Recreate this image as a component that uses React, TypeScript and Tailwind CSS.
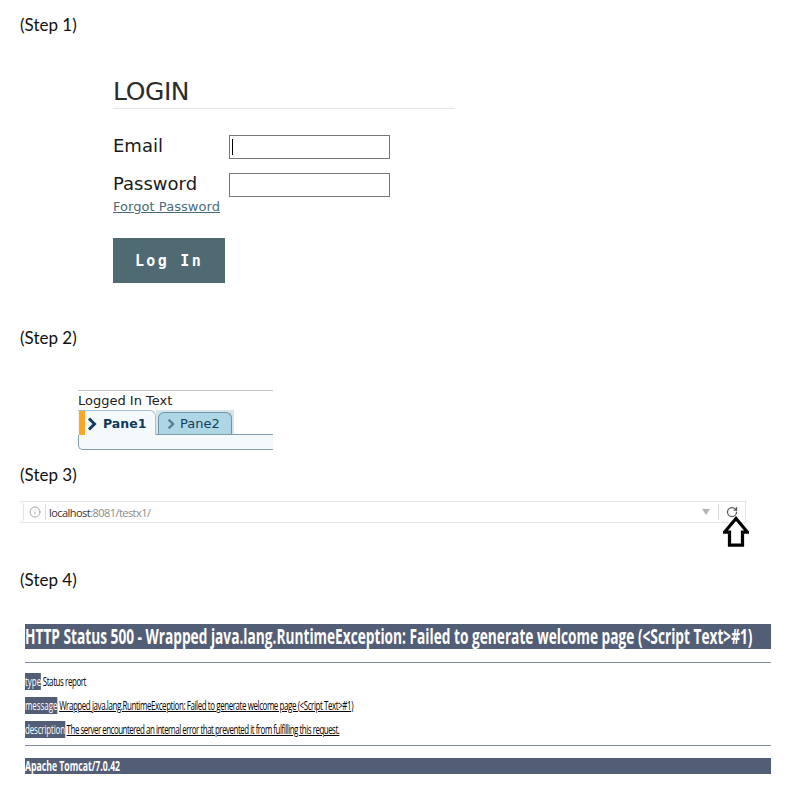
import { Info, RotateCw } from "lucide-react";

function StepLabel(props: { children: React.ReactNode; className?: string }) {
  return (
    <p
      className={`pl-[20px] h-[20px] text-[17px] leading-[20px] text-[#111] font-['Lato',sans-serif] ${props.className ?? ""}`}
    >
      {props.children}
    </p>
  );
}

function LoginForm() {
  return (
    <div className="ml-[113px] mt-[40px] font-['DejaVu_Sans',sans-serif]">
      <h1 className="w-[342px] h-[34px] border-b border-[#e6e6e6] pt-[2px] text-[25px] leading-[30px] text-[#2b2b2b] tracking-[-0.4px]">
        LOGIN
      </h1>
      <div className="mt-[26px] flex items-start">
        <label className="w-[116px] text-[18px] leading-[22px] text-[#1a1a1a]">Email</label>
        <div className="w-[161px] h-[24px] border border-[#767676] bg-white pl-[2px] pt-[3px]">
          <div className="w-px h-[16px] bg-black" />
        </div>
      </div>
      <div className="mt-[14px] flex items-start">
        <label className="w-[116px] text-[18px] leading-[22px] text-[#1a1a1a]">Password</label>
        <div className="w-[161px] h-[24px] border border-[#767676] bg-white" />
      </div>
      <a className="block mt-[2px] w-fit text-[13px] leading-[15px] text-[#4a6b7c] underline tracking-[0.05px]">
        Forgot Password
      </a>
      <button className="block mt-[24px] w-[112px] h-[45px] bg-[#4f6a72] pt-[1px] text-white text-[15px] font-bold tracking-[2.3px] font-['DejaVu_Sans_Mono',monospace]">
        Log In
      </button>
    </div>
  );
}

function PaneTabs() {
  return (
    <div className="ml-[78px] mt-[42px] w-[195px] font-['DejaVu_Sans',sans-serif]">
      <div className="h-[20px] border-t border-[#c4c4c4] text-[13px] leading-[19px] text-[#222]">Logged In Text</div>
      <div className="h-[40px] flex flex-col">
        <div className="flex h-[24px] items-end">
          <div className="relative z-10 -mb-px flex h-[25px] w-[78px] items-center rounded-tr-[6px] border-t border-r border-[#a9c2cf] bg-[#f4f9fb]">
            <div className="ml-px h-[24px] w-[6px] bg-[#fba625]" />
            <svg viewBox="0 0 10 14" className="ml-[2px] mt-[2px] h-[14px] w-[10px]">
              <path d="M2 1.5 L7.5 7 L2 12.5" fill="none" stroke="#123f5f" strokeWidth="3" />
            </svg>
            <span className="ml-[6px] mt-[2px] text-[12.5px] font-bold text-[#0f3a5a]">Pane1</span>
          </div>
          <div className="flex h-[24px] w-[78px] items-end bg-[#d5e6ea] pl-[2px] pr-[2px]">
            <div className="flex h-[22px] w-full items-center rounded-t-[6px] border border-b-0 border-[#7195a8] bg-[#aed6e4] pl-[8px]">
              <svg viewBox="0 0 10 14" className="mt-px h-[12px] w-[8px]">
                <path d="M2 1.5 L7.5 7 L2 12.5" fill="none" stroke="#55809a" strokeWidth="3" />
              </svg>
              <span className="ml-[5px] mt-px text-[13px] text-[#123f5f]">Pane2</span>
            </div>
          </div>
        </div>
        <div className="flex-1 rounded-bl-[5px] border-t border-b border-l border-[#7f9fb0] bg-[#f4f9fb]" />
      </div>
    </div>
  );
}

function UrlBar() {
  return (
    <div className="relative ml-[20px] mt-[16px] w-[726px] h-[22px] flex items-center border-y border-r border-[#e3e3e3] font-['Open_Sans',sans-serif]">
      <div className="h-full w-[4px] rounded-r-full border-r border-[#e3e3e3]" />
      <Info className="ml-[5px] h-[12px] w-[12px] text-[#8a8a8a]" strokeWidth={1.5} />
      <div className="ml-[4px] h-[16px] w-px bg-[#d8d8d8]" />
      <span className="ml-[3px] text-[11px] leading-none text-[#333] tracking-[-0.55px]">
        localhost<span className="text-[#8c8c8c]">:8081/testx1/</span>
      </span>
      <div className="ml-auto mr-[6px] h-0 w-0 border-x-[4px] border-t-[6px] border-x-transparent border-t-[#b5b5b5]" />
      <div className="ml-[2px] h-[16px] w-px bg-[#d8d8d8]" />
      <RotateCw className="mx-[7px] h-[12px] w-[12px] text-[#555]" strokeWidth={2.5} />
      <svg viewBox="0 0 24 28" className="absolute left-[703px] top-[13px] h-[33px] w-[26px]">
        <path d="M12 2 L22.5 14.5 L18 14.5 L18 26.5 L6 26.5 L6 14.5 L1.5 14.5 Z" fill="white" stroke="black" strokeWidth="3" />
      </svg>
    </div>
  );
}

function TomcatError() {
  return (
    <div className="ml-[25px] mt-[34px] w-[746px] font-['Open_Sans',sans-serif] text-black">
      <h1 className="h-[25px] bg-[#525d76] text-[21px] font-bold leading-[25px] text-white whitespace-nowrap">
        <span className="inline-block origin-left scale-x-[0.652]">
          {"HTTP Status 500 - Wrapped java.lang.RuntimeException: Failed to generate welcome page (<Script Text>#1)"}
        </span>
      </h1>
      <div className="mt-[13px] h-px bg-[#7f8aa0]" />
      <div className="mt-[11px] flex flex-col gap-[9px] text-[12px] leading-[15px] whitespace-nowrap tracking-[-0.6px]">
        <p className="origin-left scale-x-[0.66]">
          <b className="bg-[#525d76] font-normal tracking-normal text-white">type</b> Status report
        </p>
        <p className="origin-left scale-x-[0.66]">
          <b className="bg-[#525d76] font-normal tracking-normal text-white">message</b>{" "}
          <u>{"Wrapped java.lang.RuntimeException: Failed to generate welcome page (<Script Text>#1)"}</u>
        </p>
        <p className="origin-left scale-x-[0.66]">
          <b className="bg-[#525d76] font-normal tracking-[-0.2px] text-white">description</b>{" "}
          <u className="tracking-[-0.72px]">
            The server encountered an internal error that prevented it from fulfilling this request.
          </u>
        </p>
      </div>
      <div className="mt-[8px] h-px bg-[#7f8aa0]" />
      <h3 className="mt-[12px] h-[16px] bg-[#525d76] text-[14px] font-bold leading-[16px] text-white">
        <span className="inline-block origin-left scale-x-[0.62]">Apache Tomcat/7.0.42</span>
      </h3>
    </div>
  );
}

export default function App() {
  return (
    <div className="h-[803px] w-[796px] overflow-hidden bg-white pt-[15px]">
      <StepLabel>(Step 1)</StepLabel>
      <LoginForm />
      <StepLabel className="mt-[45px]">(Step 2)</StepLabel>
      <PaneTabs />
      <StepLabel className="mt-[15px]">(Step 3)</StepLabel>
      <UrlBar />
      <StepLabel className="mt-[47px]">(Step 4)</StepLabel>
      <TomcatError />
    </div>
  );
}
